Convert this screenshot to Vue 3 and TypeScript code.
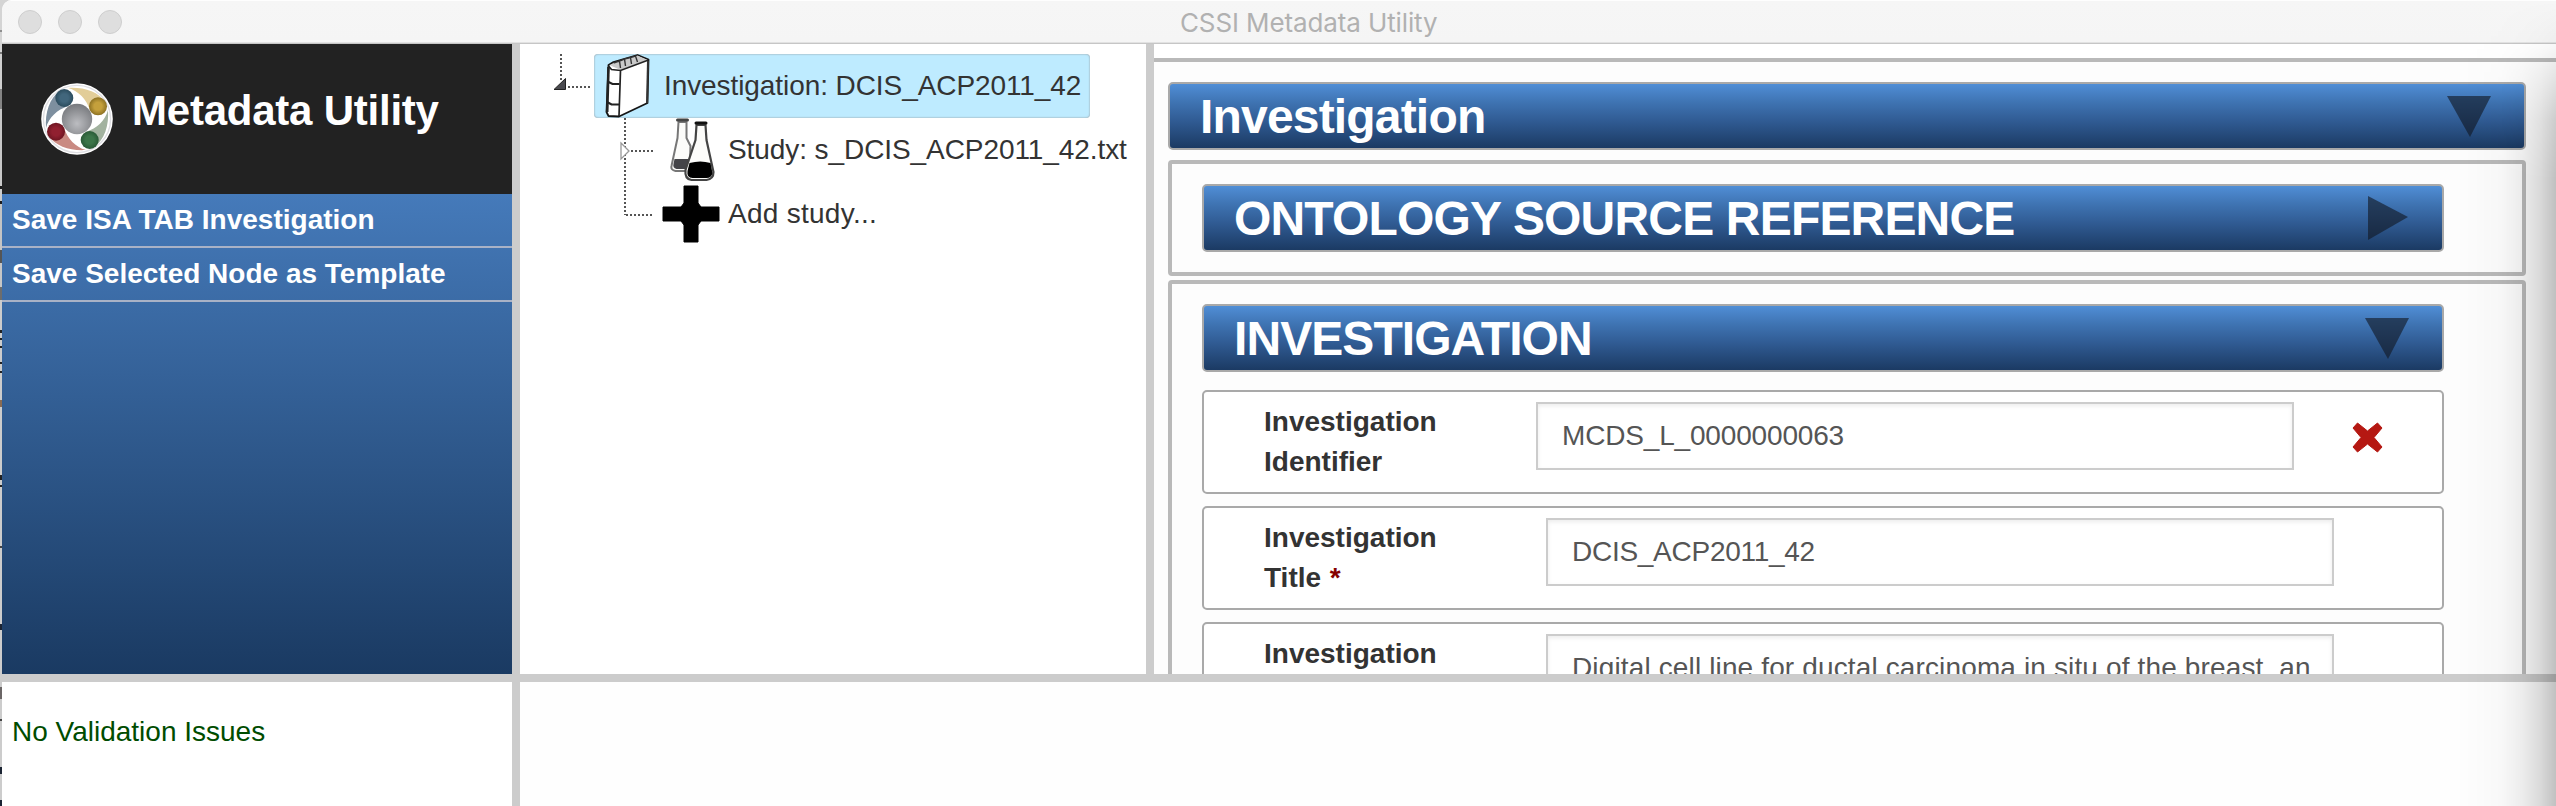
<script setup lang="ts">
interface Field {
  id: string
  lines: string[]
  required?: boolean
  value: string
  removable?: boolean
}

const menuItems: string[] = ['Save ISA TAB Investigation', 'Save Selected Node as Template']

const logoBlades = [
  { angle: 0, disc: '#c4a03c', edge: '#83691f', blade: '#e2cd98' },
  { angle: 90, disc: '#3c7549', edge: '#275534', blade: '#a2b29f' },
  { angle: 180, disc: '#912030', edge: '#68141f', blade: '#c98a82' },
  { angle: 270, disc: '#41667c', edge: '#274758', blade: '#7d8f9f' },
]

const fields: Field[] = [
  { id: 'identifier', lines: ['Investigation', 'Identifier'], value: 'MCDS_L_0000000063', removable: true },
  { id: 'title', lines: ['Investigation', 'Title'], required: true, value: 'DCIS_ACP2011_42' },
  {
    id: 'description',
    lines: ['Investigation'],
    value: 'Digital cell line for ductal carcinoma in situ of the breast, an',
  },
]
</script>

<template>
  <div class="desktop">
    <div class="window">
      <header class="titlebar">
        <div class="lights"><i></i><i></i><i></i></div>
        <span class="window-title">CSSI Metadata Utility</span>
      </header>

      <div class="upper">
        <aside class="sidebar">
          <div class="brand">
            <svg class="logo" viewBox="0 0 72 72">
              <defs>
                <radialGradient id="hub" cx=".5" cy=".65" r=".65">
                  <stop offset="0" stop-color="#bcbdc1" />
                  <stop offset="1" stop-color="#77797d" />
                </radialGradient>
                <radialGradient v-for="b in logoBlades" :id="'disc' + b.angle" :key="b.angle" cx=".5" cy=".5" r=".55">
                  <stop offset=".4" :stop-color="b.disc" />
                  <stop offset="1" :stop-color="b.edge" />
                </radialGradient>
              </defs>
              <circle cx="36" cy="36" r="35.8" fill="#fff" />
              <circle cx="36" cy="36" r="33.6" fill="none" stroke="#dedee2" stroke-width="1.4" />
              <g v-for="b in logoBlades" :key="b.angle" :transform="`rotate(${b.angle} 36 36)`">
                <path d="M27 5C42 4 57 8 65 20L49 27C45 16 38 8 27 5Z" :fill="b.blade" />
                <circle cx="57" cy="23.3" r="9" :fill="`url(#disc${b.angle})`" />
              </g>
              <circle cx="36" cy="36" r="15.2" fill="url(#hub)" />
            </svg>
            <span class="brand-name">Metadata Utility</span>
          </div>
          <nav class="menu">
            <div v-for="item in menuItems" :key="item" class="menu-item">{{ item }}</div>
          </nav>
        </aside>

        <section class="tree">
          <svg class="connectors" width="140" height="190" viewBox="0 0 140 190">
            <g fill="none" stroke="#555" stroke-width="2" stroke-dasharray="2 2">
              <path d="M41 10V36M48 43H70M105 74V171M111 107H134M106 171H134" />
            </g>
            <path d="M34 45.500L45.500 34.500V45.500Z" fill="#4a4a4f" stroke="#222" />
            <path d="M101 99L109 107L101 115Z" fill="#fff" stroke="#999" stroke-width="1.300" />
          </svg>
          <div class="node selected">
            <svg class="book" viewBox="0 0 44 64">
              <path d="M3 11L8 8L32 1L43 5.500L42 49L13.500 62.500L3 62L1 58Z" fill="#fff" stroke="#151515" stroke-width="1.800" stroke-linejoin="round" />
              <path d="M4 11L32 1.500L42 6L15 16Z" fill="#c9c9c9" />
              <path d="M3 12L6 15.500L15 16.500L43 6M15 16.500L13.500 62" fill="none" stroke="#222" stroke-width="1.700" />
              <path d="M8 9L14 7L15 14M14 7L19 5L20 12M19 5L25 3.500L26 10M25 3.500L30 2L32 8" fill="none" stroke="#333" stroke-width="1.400" />
              <path d="M3 28L7 30L14 30M1.500 48L6 50.500L14 50.500" fill="none" stroke="#222" stroke-width="2.200" />
              <path d="M3 13L1.700 58" stroke="#222" stroke-width="2.600" />
              <path d="M42.500 7L41.500 49" stroke="#333" stroke-width="2" />
            </svg>
            <span>Investigation: DCIS_ACP2011_42</span>
          </div>
          <div class="node child study">
            <svg class="flasks" viewBox="0 0 44 64">
              <path d="M8 4L7 20L1 48Q0 52 5 53L19 53L20 28L16 20L16 4Z" fill="#fcfcfa" stroke="#777" stroke-width="2" />
              <path d="M4 41H18L18 51H6Q2 50 3 46Z" fill="#444448" />
              <path d="M7 2H17" stroke="#444" stroke-width="3" stroke-linecap="round" />
              <path d="M26 7L25 22L15 52Q14 61 21 62H36Q43 61 43 54L36 22L35 7Z" fill="#fcfcfa" stroke="#444" stroke-width="2.200" />
              <path d="M25.500 5H35.500" stroke="#111" stroke-width="3" stroke-linecap="round" />
              <path d="M19 45Q30 42 40 45L42 55Q41 60 36 60H22Q16 60 17 53Z" fill="#000" />
            </svg>
            <span>Study: s_DCIS_ACP2011_42.txt</span>
          </div>
          <div class="node child add">
            <svg class="plus" viewBox="0 0 58 58">
              <path d="M22 1H36V18L39 22H57V36H39L36 40V57H22V40L19 36H1V22H19L22 18Z" fill="#000" stroke="#000" stroke-linejoin="round" />
            </svg>
            <span>Add study...</span>
          </div>
        </section>

        <main class="editor">
          <div class="panel">
            <h1 class="bar">
              <span>Investigation</span>
              <svg class="down" viewBox="0 0 44 41"><path d="M0 0H44L23 41Z" /></svg>
            </h1>
            <section class="group">
              <h2 class="bar">
                <span>ONTOLOGY SOURCE REFERENCE</span>
                <svg class="right" viewBox="0 0 40 44"><path d="M0 0L40 21L0 44Z" /></svg>
              </h2>
            </section>
            <section class="group">
              <h2 class="bar">
                <span class="tight">INVESTIGATION</span>
                <svg class="down" viewBox="0 0 44 41"><path d="M0 0H44L23 41Z" /></svg>
              </h2>
              <div class="fields">
                <div v-for="f in fields" :key="f.id" class="field" :class="{ removable: f.removable }">
                  <div class="label">
                    <div v-for="(line, i) in f.lines" :key="line">
                      {{ line }}<b v-if="f.required && i === f.lines.length - 1" class="star"> *</b>
                    </div>
                  </div>
                  <div class="input" :class="f.id"><span>{{ f.value }}</span></div>
                  <svg v-if="f.removable" class="remove" viewBox="0 0 31 31">
                    <path d="M5.500 1L15.500 9L25.500 1L30 6L22 15.500L30 25L25.500 30L15.500 22L5.500 30L1 25L9 15.500L1 6Z" fill="#b51812" stroke="#b51812" stroke-linejoin="round" />
                  </svg>
                </div>
              </div>
            </section>
          </div>
        </main>
      </div>

      <div class="lower">
        <div class="status">No Validation Issues</div>
        <div class="blank"></div>
      </div>
    </div>
    <div class="edge-shadow"></div>
  </div>
</template>

<style>
body {
  margin: 0;
  overflow: hidden;
}
</style>

<style scoped>
.desktop {
  position: relative;
  box-sizing: border-box;
  width: 2556px;
  height: 806px;
  padding-left: 2px;
  overflow: hidden;
  background: linear-gradient(
    #d4d4d4 0 30px, #8f8f8f 30px 32px, #d4d4d4 32px 52px, #777 52px 54px, #cfcfcf 54px 89px,
    #858585 89px 109px, #c8c8c8 109px 186px, #1b1b1b 186px 189px, #ccc 189px 201px, #1b1b1b 201px 204px,
    #c4c4c4 204px 250px, #555 250px 263px, #c6c6c6 263px 287px, #6d6d6d 287px 300px, #ccc 300px 330px,
    #222 330px 333px, #ccc 333px 338px, #222 338px 340px, #ccc 340px 346px, #222 346px 348px,
    #ccc 348px 362px, #222 362px 364px, #ccc 364px 371px, #222 371px 373px, #ccc 373px 400px,
    #8a6b52 400px 407px, #ccc 407px 475px, #222 475px 480px, #ccc 480px 485px, #222 485px 487px,
    #ccc 487px 546px, #444 546px 548px, #ccc 548px 624px, #1b2433 624px 630px, #ccc 630px 687px,
    #6b6666 687px 699px, #ccc 699px 719px, #444 719px 721px, #ccc 721px 767px, #1b2433 767px 774px,
    #ccc 774px 800px, #1b2433 800px 806px
  );
  font-family: "Liberation Sans", Arial, sans-serif;
  font-size: 28px;
  color: #333;
}
.window {
  display: flex;
  flex-direction: column;
  height: 806px;
  overflow: hidden;
  border-top-left-radius: 10px;
  background: #fefefe;
}
.titlebar {
  display: grid;
  grid-template-columns: 1178px 1fr;
  align-items: center;
  flex: none;
  box-sizing: border-box;
  height: 44px;
  border-top: 1px solid #fefefe;
  border-bottom: 1px solid #c6c6c6;
  background: linear-gradient(#f6f6f6, #f5f5f5 41px, #e2e2e2 41px);
}
.lights {
  display: flex;
  gap: 16px;
  padding-left: 16px;
}
.lights i {
  box-sizing: border-box;
  width: 24px;
  height: 24px;
  border: 1px solid #cecece;
  border-radius: 50%;
  background: #dedede;
}
.window-title {
  padding-top: 2px;
  font: 26px/40px Inter, sans-serif;
  letter-spacing: -0.12px;
  color: #b1b1b1;
}
.upper {
  display: grid;
  grid-template-columns: 510px 626px 1402px;
  column-gap: 8px;
  flex: none;
  height: 630px;
  border-bottom: 8px solid #ccc;
  background: #ccc;
}
.sidebar {
  display: flex;
  flex-direction: column;
}
.brand {
  display: flex;
  align-items: flex-start;
  gap: 19px;
  box-sizing: border-box;
  height: 150px;
  padding: 37px 0 0 39px;
  background: #222;
}
.logo {
  width: 72px;
  height: 72px;
  margin-top: 2px;
}
.brand-name {
  font-size: 42px;
  font-weight: 700;
  line-height: 60px;
  letter-spacing: -0.23px;
  color: #fff;
}
.menu {
  flex: 1;
  background: linear-gradient(#457aba, #1a3a62);
}
.menu-item {
  height: 52px;
  padding-left: 10px;
  border-bottom: 2px solid #a9b2c6;
  font-weight: 700;
  line-height: 52px;
  color: #fff;
}
.tree {
  position: relative;
  padding-top: 10px;
  background: #fff;
}
.connectors {
  position: absolute;
  left: 0;
  top: 0;
}
.node {
  display: flex;
  align-items: center;
  box-sizing: border-box;
  height: 64px;
  white-space: nowrap;
  letter-spacing: -0.08px;
}
.node.selected {
  width: 496px;
  margin-left: 74px;
  padding-left: 11px;
  border-radius: 4px;
  background: #beebff;
  box-shadow: inset 0 0 2px #888;
}
.book {
  flex: none;
  width: 45px;
  height: 64px;
  margin-right: 14px;
}
.child {
  padding-left: 142px;
}
.flasks {
  width: 45px;
  height: 64px;
  margin: 0 13px 0 8px;
}
.plus {
  width: 58px;
  height: 58px;
  margin-right: 8px;
}
.add {
  letter-spacing: 0.27px;
}
.editor {
  overflow: hidden;
  padding-top: 14px;
  background: #fff;
}
.panel {
  padding: 20px 30px 0 14px;
  border-top: 4px solid #b9b9b9;
  background: #fdfdfd;
}
.bar {
  display: flex;
  align-items: center;
  justify-content: space-between;
  box-sizing: border-box;
  height: 68px;
  margin: 0;
  padding: 0 33px 0 30px;
  border: 2px solid #a9a9a9;
  border-radius: 5px;
  background: linear-gradient(#508ed6, #3f74b3 28%, #305b93 58%, #1b3a63);
  font-size: 48px;
  font-weight: 700;
  line-height: 60px;
  letter-spacing: -0.82px;
  color: #fff;
}
.bar span {
  padding-top: 2px;
}
.bar .tight {
  letter-spacing: -0.93px;
}
.bar path {
  fill: #111823;
  fill-opacity: 0.62;
}
.down {
  width: 44px;
  height: 41px;
}
.right {
  width: 40px;
  height: 44px;
  margin-right: 1px;
}
.group {
  margin-top: 4px;
  padding: 20px 78px 20px 30px;
  border: 4px solid #b9b9b9;
  border-radius: 4px;
}
h1 + .group {
  margin-top: 10px;
}
.fields {
  display: flex;
  flex-direction: column;
  gap: 12px;
  margin-top: 18px;
}
.field {
  display: flex;
  box-sizing: border-box;
  height: 104px;
  padding: 10px 0 0 60px;
  border: 2px solid #a9a9a9;
  border-radius: 5px;
  background: #fff;
}
.label {
  width: 282px;
  font-weight: 700;
  line-height: 40px;
}
.removable .label {
  width: 272px;
}
.star {
  padding-left: 1px;
  color: #850000;
}
.input {
  box-sizing: border-box;
  width: 788px;
  height: 68px;
  padding: 0 24px;
  border: 2px solid #ccc;
  box-shadow: inset 0 2px 4px rgba(0, 0, 0, 0.08);
  line-height: 64px;
  letter-spacing: -0.27px;
  color: #555;
}
.input span {
  display: block;
  white-space: nowrap;
}
.input.identifier {
  width: 758px;
  letter-spacing: -0.17px;
}
.input.description {
  letter-spacing: 0.137px;
}
.remove {
  width: 31px;
  height: 31px;
  margin: 20px 0 0 58px;
}
.lower {
  display: grid;
  grid-template-columns: 510px 1fr;
  column-gap: 8px;
  flex: 1;
  background: #ccc;
}
.status {
  padding: 30px 0 0 10px;
  background: #fff;
  line-height: 40px;
  color: #004c00;
}
.blank {
  background: #fefefe;
}
.edge-shadow {
  position: absolute;
  right: 0;
  top: 0;
  width: 100px;
  height: 806px;
  background: linear-gradient(
    90deg,
    transparent, rgba(0, 0, 0, 0.01) 25%, rgba(0, 0, 0, 0.025) 45%, rgba(0, 0, 0, 0.065) 65%,
    rgba(0, 0, 0, 0.13) 82%, rgba(0, 0, 0, 0.24)
  );
  -webkit-mask-image: linear-gradient(transparent, rgba(0, 0, 0, 0.12) 44px, rgba(0, 0, 0, 0.4) 75px, rgba(0, 0, 0, 0.8) 120px, #000 180px);
  mask-image: linear-gradient(transparent, rgba(0, 0, 0, 0.12) 44px, rgba(0, 0, 0, 0.4) 75px, rgba(0, 0, 0, 0.8) 120px, #000 180px);
}
</style>
